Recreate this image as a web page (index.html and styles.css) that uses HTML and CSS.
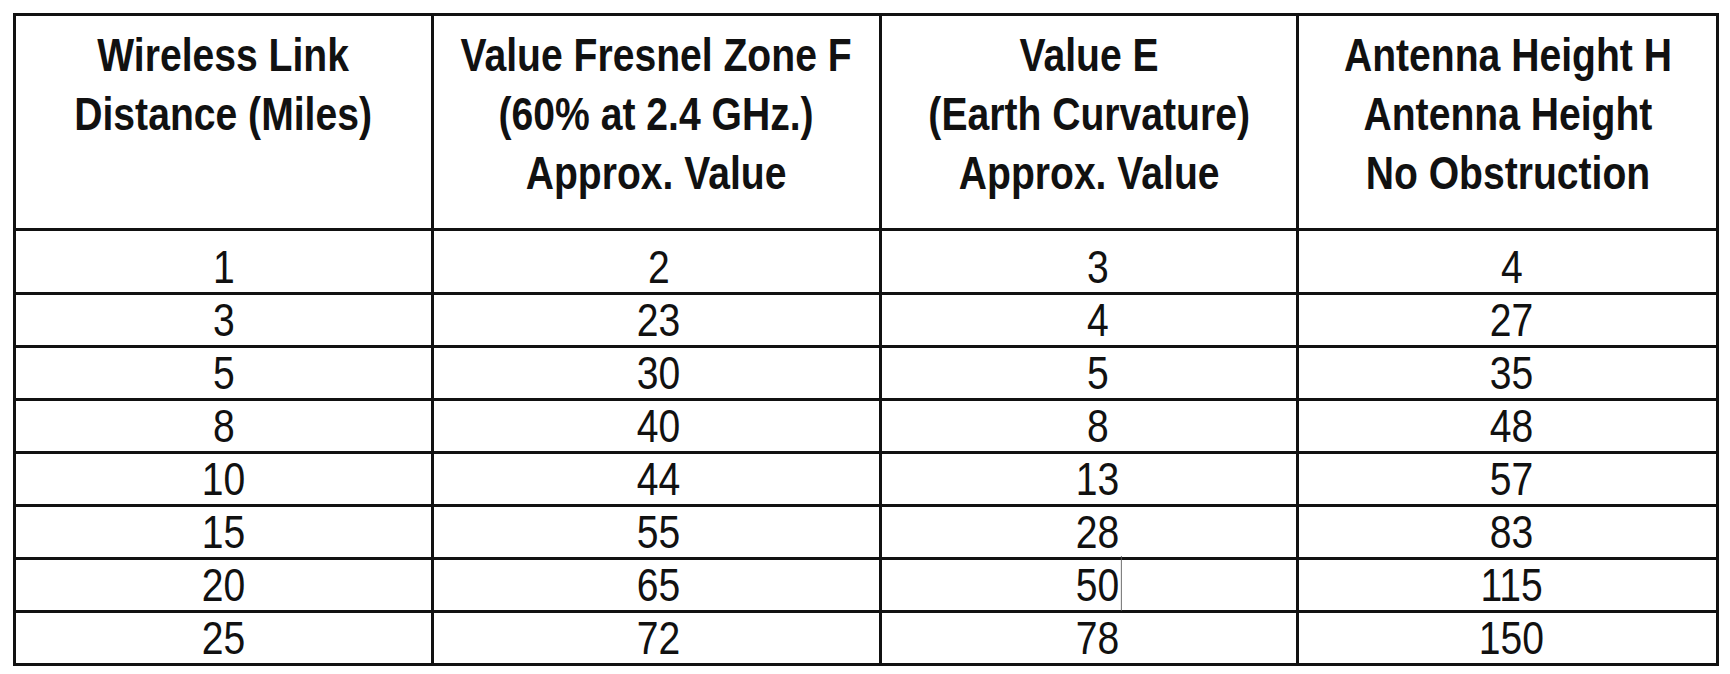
FILE: index.html
```html
<!DOCTYPE html>
<html lang="en">
<head>
  <meta charset="UTF-8" />
  <meta name="viewport" content="width=device-width, initial-scale=1.0"/>
  <title>Antenna Height Table</title>
  <link rel="stylesheet" href="styles.css">
</head>
<body>

  <table class="height-table">
    <colgroup>
      <col class="col-distance">
      <col class="col-fresnel">
      <col class="col-earth">
      <col class="col-height">
    </colgroup>
    <thead>
      <tr>
        <th><div class="head"><span>Wireless Link<br>Distance (Miles)</span></div></th>
        <th><div class="head"><span>Value Fresnel Zone F<br>(60% at 2.4 GHz.)<br>Approx. Value</span></div></th>
        <th><div class="head"><span>Value E<br>(Earth Curvature)<br>Approx. Value</span></div></th>
        <th><div class="head"><span>Antenna Height H<br>Antenna Height<br>No Obstruction</span></div></th>
      </tr>
    </thead>
    <tbody>
      <tr class="first-row"><td><span>1</span></td><td><span>2</span></td><td><span>3</span></td><td><span>4</span></td></tr>
      <tr><td><span>3</span></td><td><span>23</span></td><td><span>4</span></td><td><span>27</span></td></tr>
      <tr><td><span>5</span></td><td><span>30</span></td><td><span>5</span></td><td><span>35</span></td></tr>
      <tr><td><span>8</span></td><td><span>40</span></td><td><span>8</span></td><td><span>48</span></td></tr>
      <tr><td><span>10</span></td><td><span>44</span></td><td><span>13</span></td><td><span>57</span></td></tr>
      <tr><td><span>15</span></td><td><span>55</span></td><td><span>28</span></td><td><span>83</span></td></tr>
      <tr><td><span>20</span></td><td><span>65</span></td><td><span class="mark">50</span></td><td><span>115</span></td></tr>
      <tr><td><span>25</span></td><td><span>72</span></td><td><span>78</span></td><td><span>150</span></td></tr>
    </tbody>
  </table>

</body>
</html>
```

FILE: styles.css
```css
* {
  box-sizing: border-box;
  margin: 0;
  padding: 0;
}

body {
  background-color: #ffffff;
  color: #111;
  font-family: 'Liberation Sans', Arial, sans-serif;
  padding: 13px 0 0 13px;
}

.height-table {
  border-collapse: collapse;
  width: 1703px;
  table-layout: fixed;
  border: 3px solid #111;
}

.col-distance { width: 418px; }
.col-fresnel { width: 448px; }
.col-earth { width: 417px; }
.col-height { width: 420px; }

th, td {
  border: 3px solid #111;
  text-align: center;
}

/* condensed look: the glyphs are narrowed, the cells keep their width */
th span, td span {
  display: inline-block;
  white-space: nowrap;
  transform: scaleX(0.85);
  transform-origin: center;
}

th {
  height: 215px;
  vertical-align: top;
  padding-top: 10px;
  font-size: 46px;
  font-weight: bold;
  line-height: 59px;
}

.head {
  display: flex;
  justify-content: center;
}

td {
  height: 53px;
  vertical-align: bottom;
  padding-bottom: 2px;
  font-size: 46px;
  line-height: 46px;
}

td:nth-child(2) { padding-left: 5px; }
td:nth-child(3) { padding-left: 18px; }
td:nth-child(4) { padding-left: 8px; }

.first-row td {
  height: 64px;
}

.mark {
  position: relative;
}

.mark::after {
  content: '';
  position: absolute;
  right: -3px;
  top: -6px;
  bottom: -3px;
  border-left: 1px solid #555;
}
```
